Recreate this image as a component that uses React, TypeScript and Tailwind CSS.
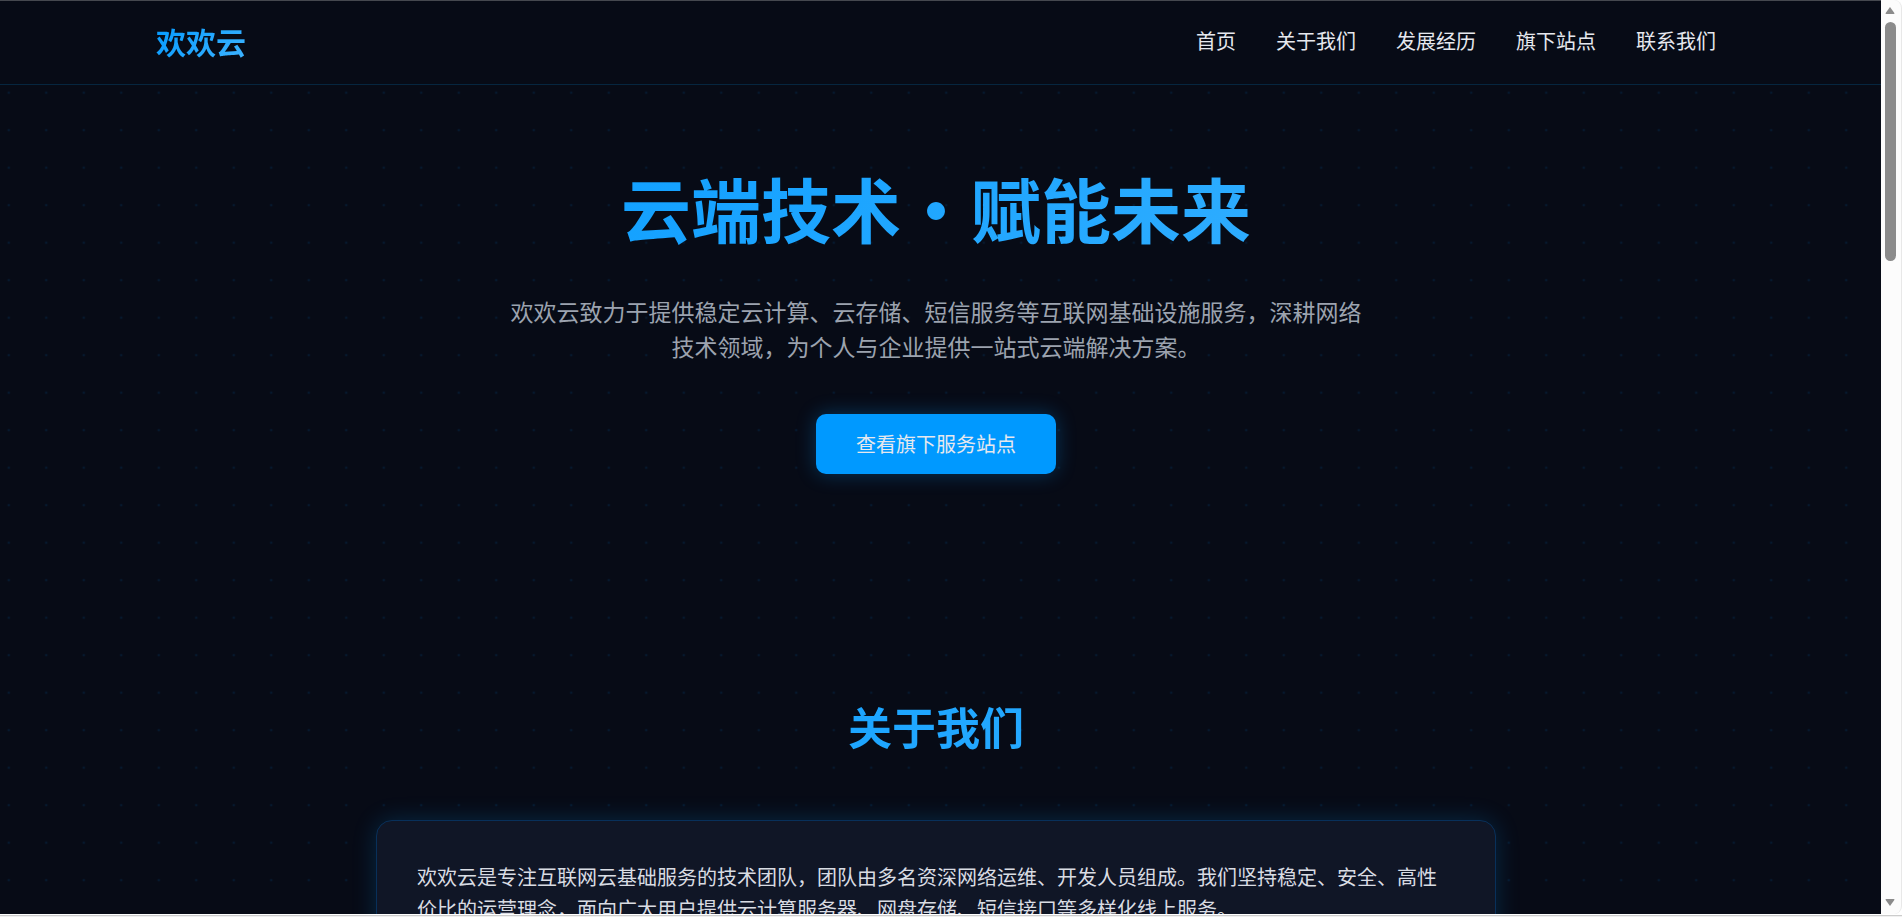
const navItems = [
    {label: "首页", href: "#home"},
    {label: "关于我们", href: "#about"},
    {label: "发展经历", href: "#history"},
    {label: "旗下站点", href: "#sites"},
    {label: "联系我们", href: "#contact"},
];

function DotGrid() {
    return (
        <svg className="absolute inset-0 w-full h-full" aria-hidden="true">
            <defs>
                <pattern id="dots" x="-10" y="-6" width="37.5" height="37.5" patternUnits="userSpaceOnUse">
                    <circle cx="18.75" cy="23.7" r="1.3" fill="#0099ff" fillOpacity="0.1"/>
                </pattern>
            </defs>
            <rect width="100%" height="100%" fill="url(#dots)"/>
        </svg>
    );
}

function Header() {
    return (
        <header className="relative bg-[#070b16] border-t border-t-[#45484f] border-b border-b-[#06263f] pr-[9px]">
            <div className="flex items-center justify-between w-10/12 max-w-[1560px] mx-auto h-[83px] pb-1">
                <a href="#home"
                   className="text-[30px] leading-[48px] font-bold text-transparent bg-clip-text bg-linear-135/srgb from-[#0099ff] to-[#40b4ff]">
                    欢欢云
                </a>
                <nav className="flex gap-10">
                    {navItems.map((item) => (
                        <a key={item.href} href={item.href} className="text-xl leading-8 text-[#e6e8ee]">
                            {item.label}
                        </a>
                    ))}
                </nav>
            </div>
        </header>
    );
}

function Hero() {
    return (
        <section id="home" className="relative flex flex-col items-center text-center pt-[67px]">
            <h1 className="w-full max-w-[1560px] text-[70px] leading-[112px] font-bold text-transparent bg-clip-text bg-linear-135/srgb from-[#0099ff] to-[#40b4ff]">
                云端技术・赋能未来
            </h1>
            <p className="mt-[30px] w-full max-w-[860px] text-[23px] leading-[35px] text-[#9ca3af]">
                欢欢云致力于提供稳定云计算、云存储、短信服务等互联网基础设施服务，深耕网络技术领域，为个人与企业提供一站式云端解决方案。
            </p>
            <a href="#sites"
               className="mt-[50px] px-10 py-[14px] rounded-[10px] bg-[#0099ff] text-xl leading-8 text-[#e6e8ee] shadow-[0_0_20px_rgba(0,153,255,0.3)]">
                查看旗下服务站点
            </a>
        </section>
    );
}

function About() {
    return (
        <section id="about" className="relative mt-[217px] flex flex-col items-center">
            <h2 className="w-full max-w-[1560px] text-center text-[44px] leading-[70px] font-bold text-transparent bg-clip-text bg-linear-135/srgb from-[#0099ff] to-[#40b4ff]">
                关于我们
            </h2>
            <div className="mt-[59px] w-full max-w-[1120px] p-10 rounded-2xl border border-[#08305a] bg-[#101626] shadow-[0_0_25px_rgba(0,153,255,0.2)]">
                <p className="text-xl leading-8 text-[#d9dce3]">
                    欢欢云是专注互联网云基础服务的技术团队，团队由多名资深网络运维、开发人员组成。我们坚持稳定、安全、高性价比的运营理念，面向广大用户提供云计算服务器、网盘存储、短信接口等多样化线上服务。
                </p>
            </div>
        </section>
    );
}

function Scrollbar() {
    return (
        <div className="w-[21px] shrink-0 flex flex-col items-center bg-[#fcfcfc] pt-[7px] pb-2 pr-[2px] border-r border-[#e8e8e8] rounded-r-lg" aria-hidden="true">
            <svg className="w-[10px] h-[7px]" viewBox="0 0 10 7" fill="#8b8b8b">
                <path d="M5 0L9.5 6.2Q9.5 7 8.7 7H1.3Q.5 7 .5 6.2Z"/>
            </svg>
            <div className="mt-2 w-[11px] h-[239px] rounded-full bg-[#8b8b8b]"/>
            <svg className="mt-auto w-[10px] h-[7px]" viewBox="0 0 10 7" fill="#8b8b8b">
                <path d="M5 7L9.5 .8Q9.5 0 8.7 0H1.3Q.5 0 .5 .8Z"/>
            </svg>
        </div>
    );
}

export default function App() {
    return (
        <div className="h-screen flex flex-col bg-white font-['Noto_Sans_CJK_SC',sans-serif]">
            <div className="flex grow min-h-0">
                <div className="relative grow overflow-hidden bg-[#070b16]">
                    <DotGrid/>
                    <Header/>
                    <main className="pr-[9px]">
                        <Hero/>
                        <About/>
                    </main>
                </div>
                <Scrollbar/>
            </div>
            <div className="h-[3px] shrink-0 border-y border-t-white border-b-[#f0f0f0] bg-[#cccccc]"/>
        </div>
    );
}
